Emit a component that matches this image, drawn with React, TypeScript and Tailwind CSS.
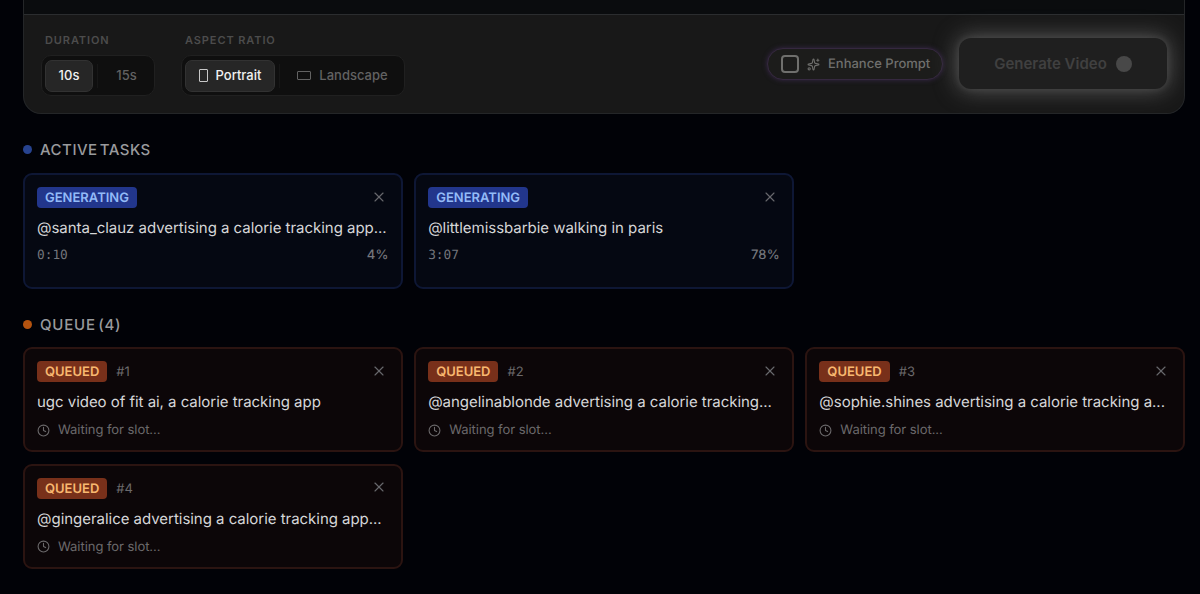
import { Clock, Sparkles, X } from 'lucide-react';
import clsx from 'clsx';

const activeTasks = [
  {
    prompt: '@santa_clauz advertising a calorie tracking app...',
    time: '0:10',
    progress: 4,
  },
  {
    prompt: '@littlemissbarbie walking in paris',
    time: '3:07',
    progress: 78,
  },
];

const queuedTasks = [
  'ugc video of fit ai, a calorie tracking app',
  '@angelinablonde advertising a calorie tracking...',
  '@sophie.shines advertising a calorie tracking a...',
  '@gingeralice advertising a calorie tracking app...',
];

export default function App(): React.ReactElement {
  return (
    <main className="h-[594px] overflow-hidden bg-[#010207] pr-[15px] pl-[23px] font-['Inter',sans-serif] text-[#d6d6d8] [text-rendering:geometricPrecision]">
      <Composer />

      <SectionTitle dot="bg-[#27438f]" className="mt-[24px] tracking-[0.5px]">
        ACTIVE TASKS
      </SectionTitle>
      <div className="mt-3 grid grid-cols-3 gap-[11.5px]">
        {activeTasks.map((task) => (
          <div
            key={task.prompt}
            className="h-[116px] rounded-[9px] border-2 border-[#0e1735] bg-[#050812] px-3 pt-3"
          >
            <div className="flex items-center justify-between">
              <Badge className="bg-[#22368c] text-[#93bbf8]">GENERATING</Badge>
              <CloseButton />
            </div>
            <Prompt>{task.prompt}</Prompt>
            <div className="mt-[7px] flex h-5 items-center justify-between text-[13px] text-[#74767c]">
              <span className="font-['DejaVu_Sans_Mono',monospace] text-[12.8px]">
                {task.time}
              </span>
              <span className="font-medium tracking-[0.2px]">
                {task.progress}%
              </span>
            </div>
          </div>
        ))}
      </div>

      <SectionTitle dot="bg-[#b4530f]" className="mt-[24px] tracking-[0.8px]">
        QUEUE (4)
      </SectionTitle>
      <div className="mt-[11px] grid grid-cols-3 gap-[11.5px]">
        {queuedTasks.map((prompt, i) => (
          <div
            key={prompt}
            className="h-[105px] rounded-[9px] border-2 border-[#2b1411] bg-[#0c0608] px-3 pt-3"
          >
            <div className="flex items-center justify-between">
              <div className="flex items-center gap-[9px]">
                <Badge className="bg-[#78301a] text-[#f8b870]">QUEUED</Badge>
                <span className="pt-0.5 text-[13px] leading-[19px] text-[#6b696b]">
                  #{i + 1}
                </span>
              </div>
              <CloseButton />
            </div>
            <Prompt>{prompt}</Prompt>
            <div className="mt-[7px] flex h-5 items-center gap-2 text-[13px] tracking-[-0.05px] text-[#6b696b]">
              <Clock className="size-[13px]" />
              <span className="pt-0.5">Waiting for slot...</span>
            </div>
          </div>
        ))}
      </div>
    </main>
  );
}

function Composer(): React.ReactElement {
  return (
    <section className="h-[114px] overflow-hidden rounded-b-[18px] border border-t-0 border-[#242628] bg-[#181818]">
      <div className="h-[15px] border-b border-[#2b2d2f] bg-[#0a0c0e]" />
      <div className="flex h-[98px] justify-between pr-[17px] pl-[17px]">
        <div className="flex gap-[26px] pt-[18px]">
          <Field label="DURATION">
            <Option active className="w-12">
              10s
            </Option>
            <Divider />
            <Option className="w-[49px]">15s</Option>
          </Field>
          <Field label="ASPECT RATIO">
            <Option active className="w-[90px] gap-2">
              <span className="h-[13px] w-[9px] rounded-[1px] border border-current opacity-80" />
              Portrait
            </Option>
            <Divider />
            <Option className="w-[117px] gap-2">
              <span className="h-[9px] w-[14px] rounded-[1px] border border-current" />
              Landscape
            </Option>
          </Field>
        </div>
        <div className="flex h-[98px] items-center gap-4">
          <label className="flex h-8 w-[176px] items-center rounded-full border border-[#35283f] bg-[#1c1c1b] pl-[13px] font-medium text-[#6f6f6d] shadow-[0_0_5px_#38284a]">
            <span className="size-[18px] rounded-[4px] border-2 border-[#6f6f6d]" />
            <Sparkles className="mr-2 ml-2 size-[13px]" />
            <span className="pt-0.5 text-[13px]">Enhance Prompt</span>
          </label>
          <button className="-mt-px flex h-[51px] w-52 items-center justify-center gap-[9px] rounded-[12px] bg-[#1f1f1f] text-[15px] font-semibold text-[#404040] shadow-[0_0_6px_#444444,0_0_22px_2px_#565656]">
            <span className="pt-0.5">Generate Video</span>
            <span className="size-4 rounded-full bg-[#484848]" />
          </button>
        </div>
      </div>
    </section>
  );
}

function Field(props: {
  label: string;
  children: React.ReactNode;
}): React.ReactElement {
  return (
    <div>
      <div className="ml-1 h-[14px] text-[11px] leading-[14px] font-semibold tracking-[0.9px] text-[#4c4c4c]">
        {props.label}
      </div>
      <div className="mt-2 flex h-[41px] items-center rounded-[10px] border border-[#202020] bg-[#0f0f0f] px-[3px]">
        {props.children}
      </div>
    </div>
  );
}

function Option(props: {
  active?: boolean;
  className?: string;
  children: React.ReactNode;
}): React.ReactElement {
  return (
    <button
      className={clsx(
        'flex h-8 items-center justify-center rounded-[7px] text-[13px] font-medium',
        props.active
          ? 'border border-[#323232] bg-[#262626] text-[#f1f1f1]'
          : 'text-[#626262]',
        props.className
      )}
    >
      {props.children}
    </button>
  );
}

function Divider(): React.ReactElement {
  return <span className="mx-1 h-6 w-px bg-[#171717]" />;
}

function SectionTitle(props: {
  dot: string;
  className?: string;
  children: React.ReactNode;
}): React.ReactElement {
  return (
    <h2
      className={clsx(
        'flex h-[23px] items-center gap-2 text-[15px] font-medium [word-spacing:-2.5px] text-[#999a9d]',
        props.className
      )}
    >
      <span className={clsx('size-[9px] rounded-full', props.dot)} />
      <span className="pt-px">{props.children}</span>
    </h2>
  );
}

function Badge(props: {
  className: string;
  children: React.ReactNode;
}): React.ReactElement {
  return (
    <span
      className={clsx(
        'flex h-[21px] items-center rounded-[4px] px-2 pt-0.5 text-[13px] leading-[19px] font-semibold',
        props.className
      )}
    >
      {props.children}
    </span>
  );
}

function CloseButton(): React.ReactElement {
  return (
    <button aria-label="Remove" className="-mt-[2px] mr-[2px] text-[#68696d]">
      <X className="size-4" strokeWidth={1.7} />
    </button>
  );
}

function Prompt({ children }: { children: React.ReactNode }) {
  return (
    <p className="mt-[9px] text-[15px] leading-[22px] tracking-[-0.03px] whitespace-nowrap">
      {children}
    </p>
  );
}
